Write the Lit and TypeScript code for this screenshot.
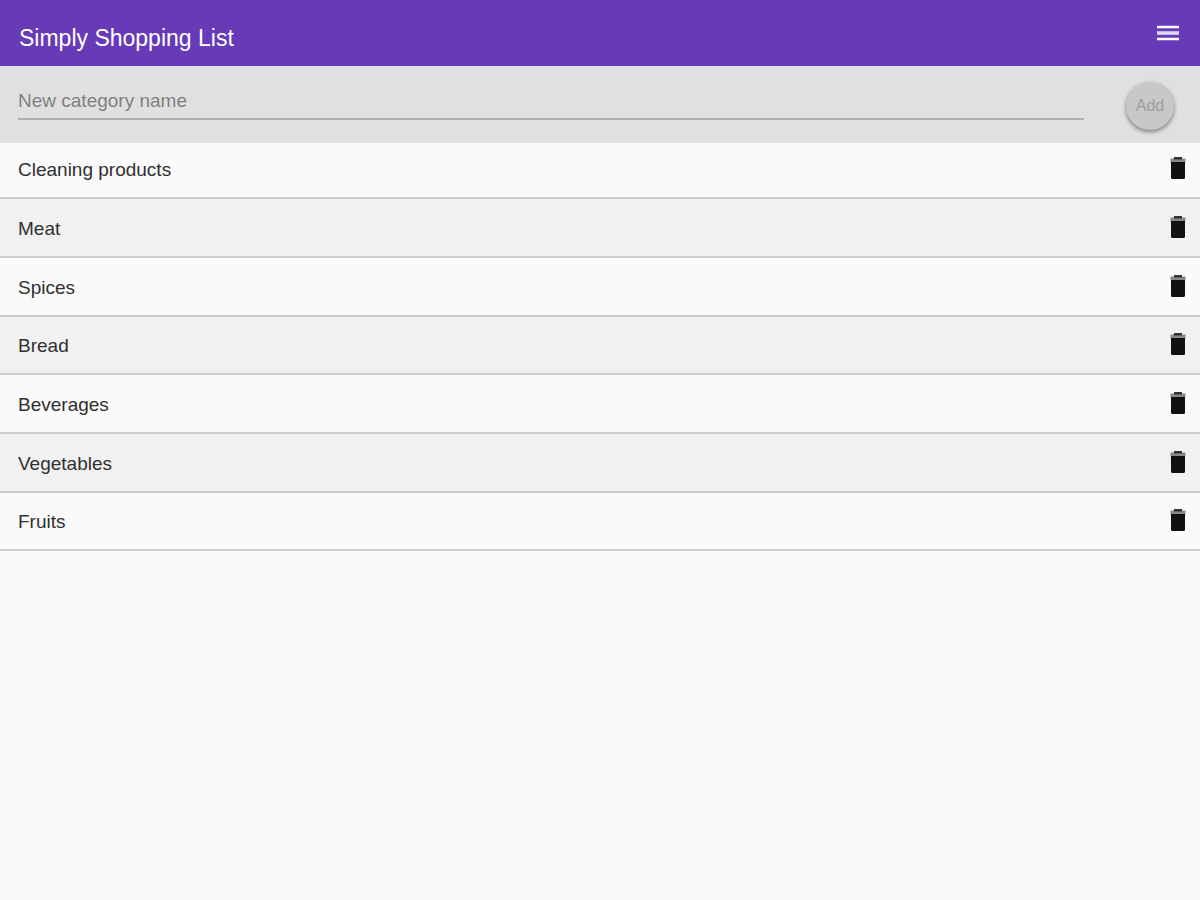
import { LitElement, html, css } from "lit";
import { customElement, state } from "lit/decorators.js";

@customElement("app-root")
export class AppRoot extends LitElement {
  static styles = css`
    :host {
      display: block;
      min-height: 100vh;
      background: #fafafa;
      color: #303030;
      font-family: "Liberation Sans", Arial, sans-serif;
      font-size: 19px;
    }
    * {
      box-sizing: border-box;
    }
    button {
      border: 0;
      padding: 0;
      background: none;
      color: inherit;
      font: inherit;
      cursor: pointer;
    }
    svg {
      display: block;
    }
    .bar {
      display: flex;
      align-items: center;
      justify-content: space-between;
      height: 66px;
      padding: 0 18px 0 19px;
      background: #673ab7;
      color: #fff;
    }
    .title {
      margin: 0;
      padding-top: 10px;
      font-size: 23px;
      line-height: 26px;
      font-weight: 400;
    }
    .form {
      position: relative;
      display: flex;
      align-items: flex-start;
      justify-content: space-between;
      gap: 42px;
      height: 77px;
      padding: 16px 26px 0 18px;
      background: #e0e0e0;
    }
    .name {
      flex: 1;
      min-width: 0;
      height: 38px;
      padding: 2px 0 0;
      border: 0;
      border-bottom: 2px solid #b0b0b0;
      border-radius: 0;
      outline: 0;
      background: none;
      color: inherit;
      font: inherit;
    }
    .name::placeholder {
      color: #808080;
      opacity: 1;
    }
    .add {
      width: 48px;
      height: 48px;
      border-radius: 50%;
      background: #c8c8c8;
      box-shadow: 0 2px 4px rgba(0, 0, 0, 0.45);
      font-size: 16px;
    }
    .add:disabled {
      color: #9c9c9c;
      cursor: default;
    }
    .list {
      margin: -2px 0 0;
      padding: 0;
      list-style: none;
    }
    .row {
      display: flex;
      align-items: center;
      justify-content: space-between;
      height: 59px;
      padding: 2px 10px 0 18px;
      border-bottom: 2px solid #cdcdcd;
    }
    .row:nth-child(3n + 1) {
      height: 58px;
    }
    .row:nth-child(even) {
      background: #f1f1f1;
    }
    .remove {
      padding-bottom: 4px;
    }
  `;

  @state() private draft = "";
  @state() private categories = [
    "Cleaning products",
    "Meat",
    "Spices",
    "Bread",
    "Beverages",
    "Vegetables",
    "Fruits",
  ];

  private add(event: Event) {
    event.preventDefault();
    const name = this.draft.trim();
    if (!name) return;
    this.categories = [name, ...this.categories];
    this.draft = "";
  }

  private remove(index: number) {
    this.categories = this.categories.filter((_, i) => i !== index);
  }

  render() {
    return html`
      <header class="bar">
        <h1 class="title">Simply Shopping List</h1>
        <button class="menu" aria-label="Menu">
          <svg width="28" height="28" viewBox="0 0 28 28" fill="currentColor">
            <path d="M3 6.7h22v2.6H3zM3 18.7h22v2.6H3z" />
            <path d="M3 12.2h22v3.6H3z" opacity="0.8" />
          </svg>
        </button>
      </header>
      <form class="form" @submit=${this.add}>
        <input
          class="name"
          type="text"
          aria-label="New category name"
          placeholder="New category name"
          .value=${this.draft}
          @input=${(e: Event) => (this.draft = (e.target as HTMLInputElement).value)}
        />
        <button class="add" type="submit" ?disabled=${!this.draft.trim()}>Add</button>
      </form>
      <ul class="list">
        ${this.categories.map(
          (name, i) => html`
            <li class="row">
              <span>${name}</span>
              <button class="remove" aria-label="Delete ${name}" @click=${() => this.remove(i)}>
                <svg width="24" height="24" viewBox="0 0 24 24">
                  <path d="M4.5 2.5h15v4h-15z" fill="#888" />
                  <path d="M8 1h8v2.5H8z" fill="#333" />
                  <path d="M5 6h14v15.5q0 1.5-1.5 1.5h-11Q5 23 5 21.5z" fill="#111" />
                </svg>
              </button>
            </li>
          `
        )}
      </ul>
    `;
  }
}
